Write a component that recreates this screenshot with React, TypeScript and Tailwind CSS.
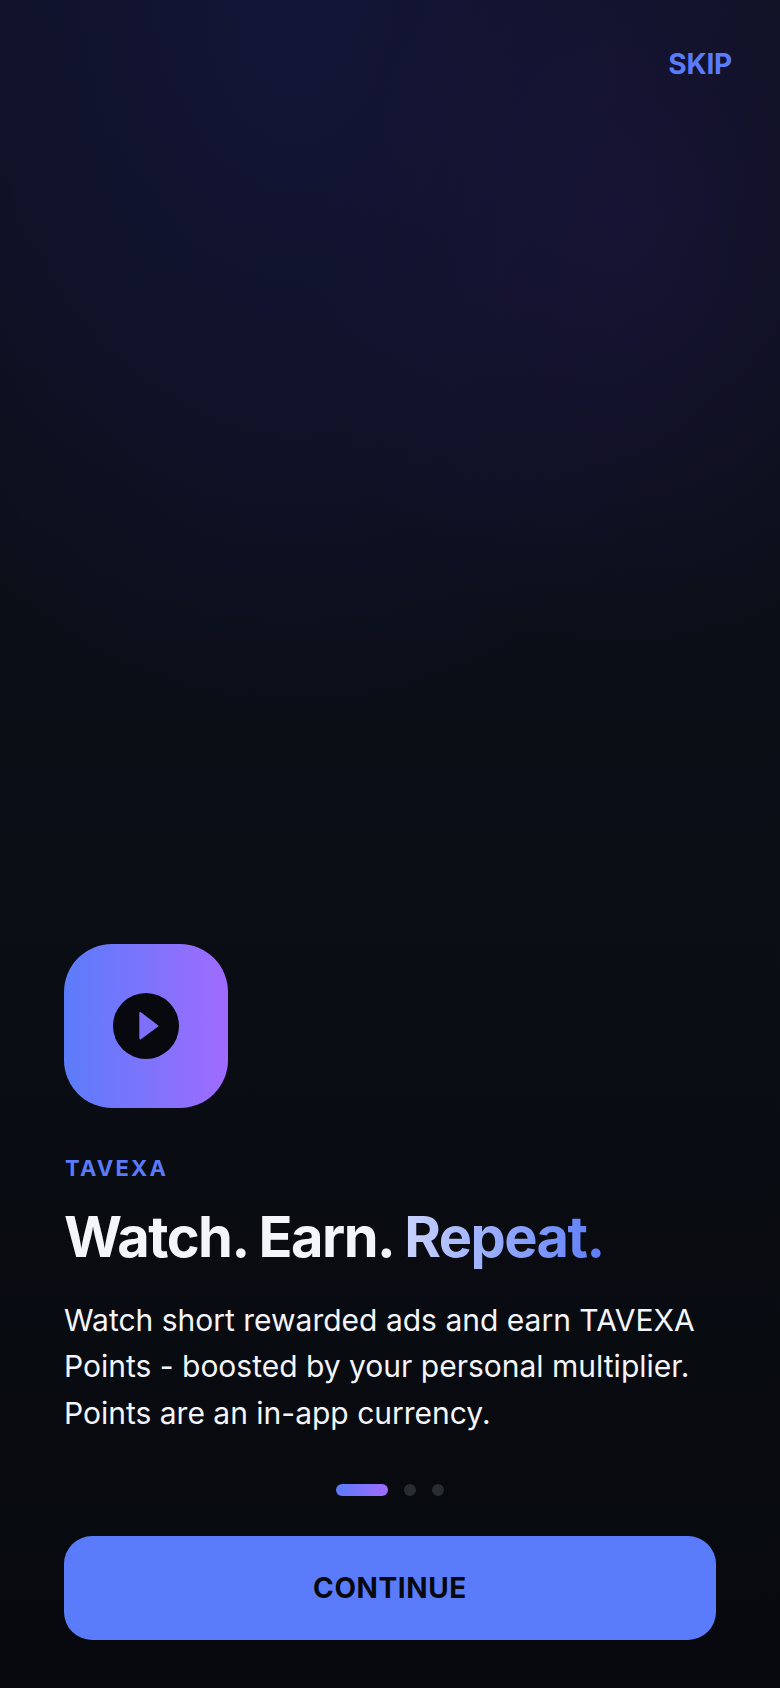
export default function App() {
  return (
    <div className="flex h-[1688px] w-[780px] flex-col overflow-hidden bg-[radial-gradient(ellipse_42%_26%_at_80%_13%,rgba(26,20,58,0.75)_0%,rgba(26,20,58,0)_100%),radial-gradient(ellipse_62%_44%_at_38%_0%,#131538_0%,rgba(19,21,56,0.55)_50%,rgba(19,21,56,0)_100%),linear-gradient(180deg,#0e1120_0%,#0b0e16_42%,#0a0d13_62%,#07090e_100%)] px-16 font-['Inter',sans-serif]">
      <div className="-mr-4 flex justify-end pt-[47px]">
        <span className="text-[28px] font-bold leading-[34px] tracking-[-0.2px] text-[#5b7cfa]">SKIP</span>
      </div>
      <div className="flex-1" />
      <div className="flex h-[164px] w-[164px] items-center justify-center rounded-[48px] bg-[linear-gradient(90deg,#5b7cfa,#a06bff)]">
        <div className="h-[66px] w-[66px] rounded-full bg-[#07090e]">
          <svg width="66" height="66" viewBox="0 0 66 66">
            <path d="M27.3 20 L44.3 33 L27.3 45.5 Z" fill="#7f70fb" stroke="#7f70fb" strokeWidth="2" strokeLinejoin="round" />
          </svg>
        </div>
      </div>
      <div className="mt-[47px] pl-px text-[22px] font-bold leading-[26px] tracking-[2.2px] text-[#5b7cfa]">TAVEXA</div>
      <h1 className="mt-[24px] text-[56px] font-bold leading-[64px] tracking-[-1.55px] text-[#f4f5fb]">
        Watch. Earn.{" "}
        <span className="bg-[linear-gradient(90deg,#c9d3fd,#5b7cfa)] bg-clip-text text-transparent">Repeat.</span>
      </h1>
      <p className="mt-[28px] text-[30px] font-normal leading-[46.5px] text-[#f4f5fb]">
        Watch short rewarded ads and earn TAVEXA
        <br />
        Points - boosted by your personal multiplier.
        <br />
        Points are an in-app currency.
      </p>
      <div className="mt-[48px] flex items-center justify-center gap-4">
        <div className="h-3 w-[52px] rounded-full bg-[linear-gradient(90deg,#5b7cfa,#a06bff)]" />
        <div className="h-3 w-3 rounded-full bg-[#2a2c33]" />
        <div className="h-3 w-3 rounded-full bg-[#2a2c33]" />
      </div>
      <button className="mt-10 mb-12 flex h-[104px] w-[652px] items-center justify-center rounded-[28px] bg-[#5b7cfa] text-[28px] font-bold tracking-[0.6px] text-[#07090e]">
        CONTINUE
      </button>
    </div>
  );
}
